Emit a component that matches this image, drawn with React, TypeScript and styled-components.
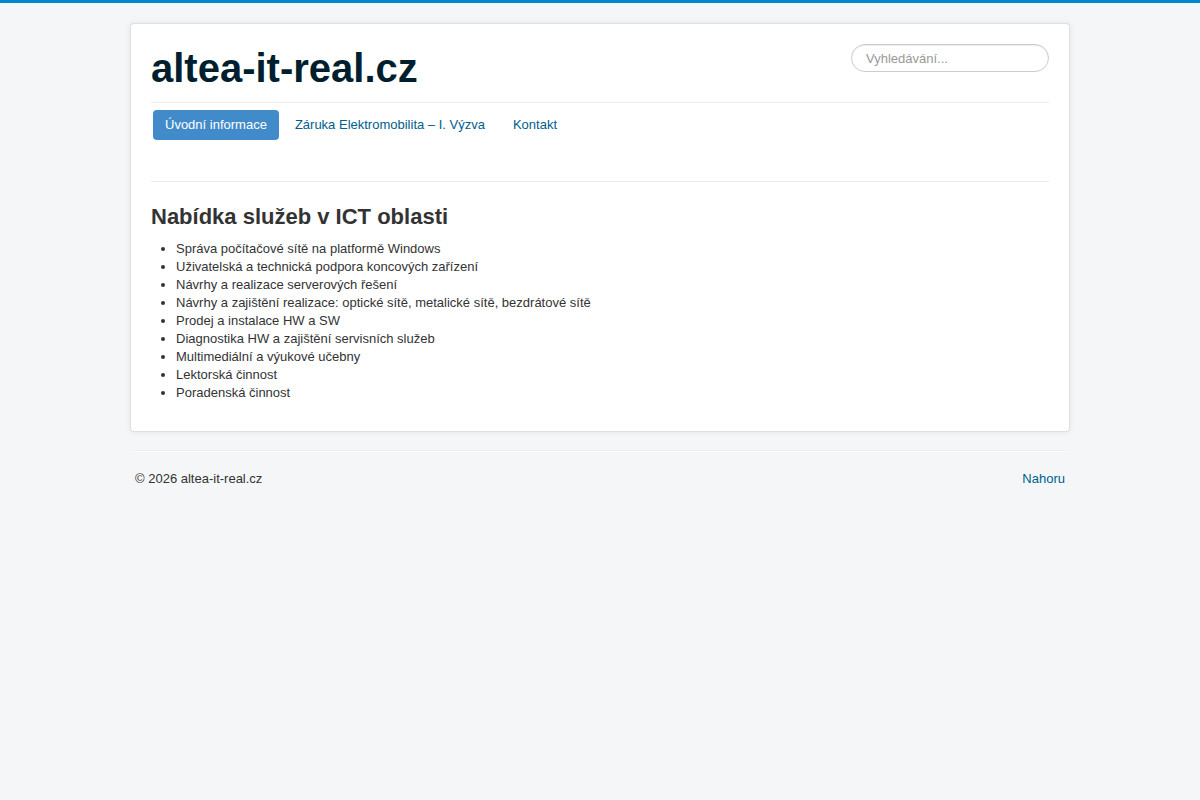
import styled, { createGlobalStyle } from "styled-components";

const services = [
  "Správa počítačové sítě na platformě Windows",
  "Uživatelská a technická podpora koncových zařízení",
  "Návrhy a realizace serverových řešení",
  "Návrhy a zajištění realizace: optické sítě, metalické sítě, bezdrátové sítě",
  "Prodej a instalace HW a SW",
  "Diagnostika HW a zajištění servisních služeb",
  "Multimediální a výukové učebny",
  "Lektorská činnost",
  "Poradenská činnost",
];

const menu = [
  { label: "Úvodní informace", active: true },
  { label: "Záruka Elektromobilita – I. Výzva", active: false },
  { label: "Kontakt", active: false },
];

function App(): React.ReactElement {
  return (
    <>
      <GlobalStyle />
      <Site>
        <Container>
          <Header>
            <Brand href="#">altea-it-real.cz</Brand>
            <SearchInput type="text" placeholder="Vyhledávání..." />
          </Header>
          <Navigation>
            <NavPills>
              {menu.map((item) => (
                <NavItem key={item.label}>
                  <NavLink href="#" $active={item.active}>
                    {item.label}
                  </NavLink>
                </NavItem>
              ))}
            </NavPills>
          </Navigation>
          <Main>
            <Heading>Nabídka služeb v ICT oblasti</Heading>
            <ServiceList>
              {services.map((s) => (
                <li key={s}>{s}</li>
              ))}
            </ServiceList>
          </Main>
        </Container>
        <Footer>
          <FooterRule />
          <FooterRow>
            <span>© 2026 altea-it-real.cz</span>
            <FooterLink href="#">Nahoru</FooterLink>
          </FooterRow>
        </Footer>
      </Site>
    </>
  );
}

const GlobalStyle = createGlobalStyle`
  html, body {
    margin: 0;
    padding: 0;
    background: #f4f6f7;
  }
  body {
    font-family: "Liberation Sans", Arial, Helvetica, sans-serif;
    font-size: 13px;
    line-height: 18px;
    color: #333;
  }
`;

const Site = styled.div`
  min-height: 800px;
  box-sizing: border-box;
  border-top: 3px solid #0088cc;
  padding: 20px 0;
`;

const Container = styled.div`
  width: 940px;
  margin: 0 auto;
  box-sizing: border-box;
  padding: 20px;
  background: #fff;
  border: 1px solid rgba(0, 0, 0, 0.12);
  border-radius: 4px;
  box-shadow: 0 0 6px rgba(0, 0, 0, 0.075);
`;

const Header = styled.header`
  display: flex;
  justify-content: space-between;
  align-items: flex-start;
  margin-bottom: 10px;
`;

const Brand = styled.a`
  font-size: 40px;
  line-height: 48px;
  font-weight: bold;
  color: #001f2e;
  text-decoration: none;
`;

const SearchInput = styled.input`
  width: 198px;
  height: 28px;
  box-sizing: border-box;
  padding: 4px 14px;
  border: 1px solid #ccc;
  border-radius: 14px;
  font-family: inherit;
  font-size: 13px;
  color: #555;
  outline: none;
  box-shadow: inset 0 1px 1px rgba(0, 0, 0, 0.075);

  &::placeholder {
    color: #999;
  }
`;

const Navigation = styled.nav`
  border-top: 1px solid rgba(0, 0, 0, 0.075);
  border-bottom: 1px solid rgba(0, 0, 0, 0.075);
  padding: 5px 0 39px;
`;

const NavPills = styled.ul`
  display: flex;
  gap: 4px;
  list-style: none;
  margin: 0;
  padding: 0 2px;
`;

const NavItem = styled.li`
  margin: 2px 0;
`;

const NavLink = styled.a<{ $active: boolean }>`
  display: block;
  padding: 6px 12px;
  line-height: 18px;
  border-radius: 4px;
  text-decoration: none;
  color: ${({ $active }) => ($active ? "#fff" : "#005e8d")};
  background: ${({ $active }) => ($active ? "#428bca" : "transparent")};
`;

const Main = styled.main``;

const Heading = styled.h2`
  margin: 21px 0 10px;
  font-size: 22px;
  line-height: 27px;
  font-weight: bold;
  color: #333;
`;

const ServiceList = styled.ul`
  margin: 0 0 9px 25px;
  padding: 0;

  li {
    line-height: 18px;
  }
`;

const Footer = styled.footer`
  width: 940px;
  margin: 0 auto;
  box-sizing: border-box;
  padding: 0 5px;
`;

const FooterRule = styled.hr`
  margin: 18px 0 18px;
  border: 0;
  border-top: 1px solid #eee;
  border-bottom: 1px solid #fff;
`;

const FooterRow = styled.div`
  display: flex;
  justify-content: space-between;
`;

const FooterLink = styled.a`
  color: #005e8d;
  text-decoration: none;
`;

export default App;
